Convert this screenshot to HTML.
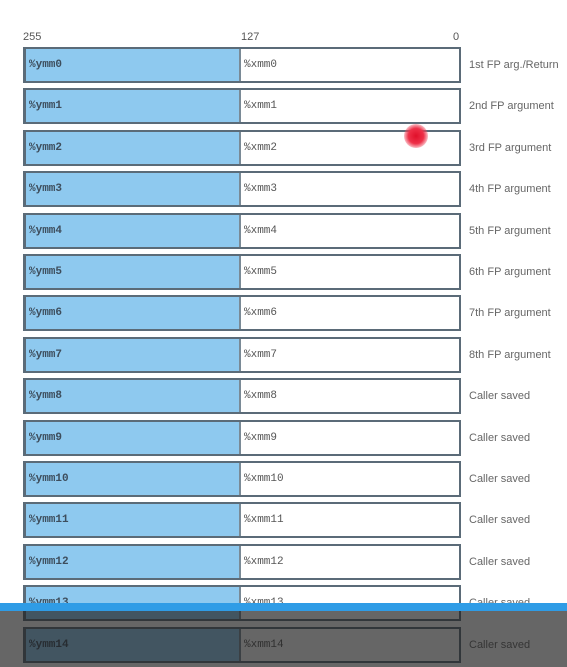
<!DOCTYPE html>
<html><head><meta charset="utf-8"><style>
body{margin:0;width:567px;height:667px;background:#fff;position:relative;overflow:hidden;font-family:"Liberation Sans",sans-serif}
.n{position:absolute;top:31px;font-size:11px;color:#555}
.row{position:absolute;left:23px;width:438px;height:36px;box-sizing:border-box;border:2px solid #5b6b78;border-left-width:3px;background:#fff}
.b{position:absolute;left:0;top:0;bottom:0;width:213px;background:#8ec9ef;border-right:2px solid #7a8a96}
.y,.x{position:absolute;top:10px;font-family:"Liberation Mono",monospace;font-size:11px;color:#3d4d5c}
.y{left:3px;font-weight:bold}.x{left:218px;color:#555}
.l{position:absolute;left:469px;font-size:11px;color:#666}
</style></head><body>
<div class="n" style="left:23px">255</div>
<div class="n" style="left:241px">127</div>
<div class="n" style="left:453px">0</div>
<div id="rows"></div>
<script>
var labels=["1st FP arg./Return","2nd FP argument","3rd FP argument","4th FP argument","5th FP argument","6th FP argument","7th FP argument","8th FP argument","Caller saved","Caller saved","Caller saved","Caller saved","Caller saved","Caller saved","Caller saved"];
var h="";
for(var i=0;i<15;i++){var t=47+i*41.4;
h+='<div class="row" style="top:'+t+'px"><div class="b"></div><span class="y">%ymm'+i+'</span><span class="x">%xmm'+i+'</span></div><div class="l" style="top:'+(t+12)+'px">'+labels[i]+'</div>';}
document.getElementById("rows").innerHTML=h;
</script>
<div style="position:absolute;left:404px;top:124px;width:24px;height:24px;border-radius:50%;background:radial-gradient(circle,#e0102a 0,#ee3048 45%,rgba(240,80,100,.4) 70%,rgba(255,255,255,0) 100%)"></div>
<div style="position:absolute;left:0;top:603px;width:567px;height:8px;background:#2f9ce6"></div>
<div style="position:absolute;left:0;top:611px;width:567px;height:56px;background:rgba(30,30,30,.68)"></div>
</body></html>
